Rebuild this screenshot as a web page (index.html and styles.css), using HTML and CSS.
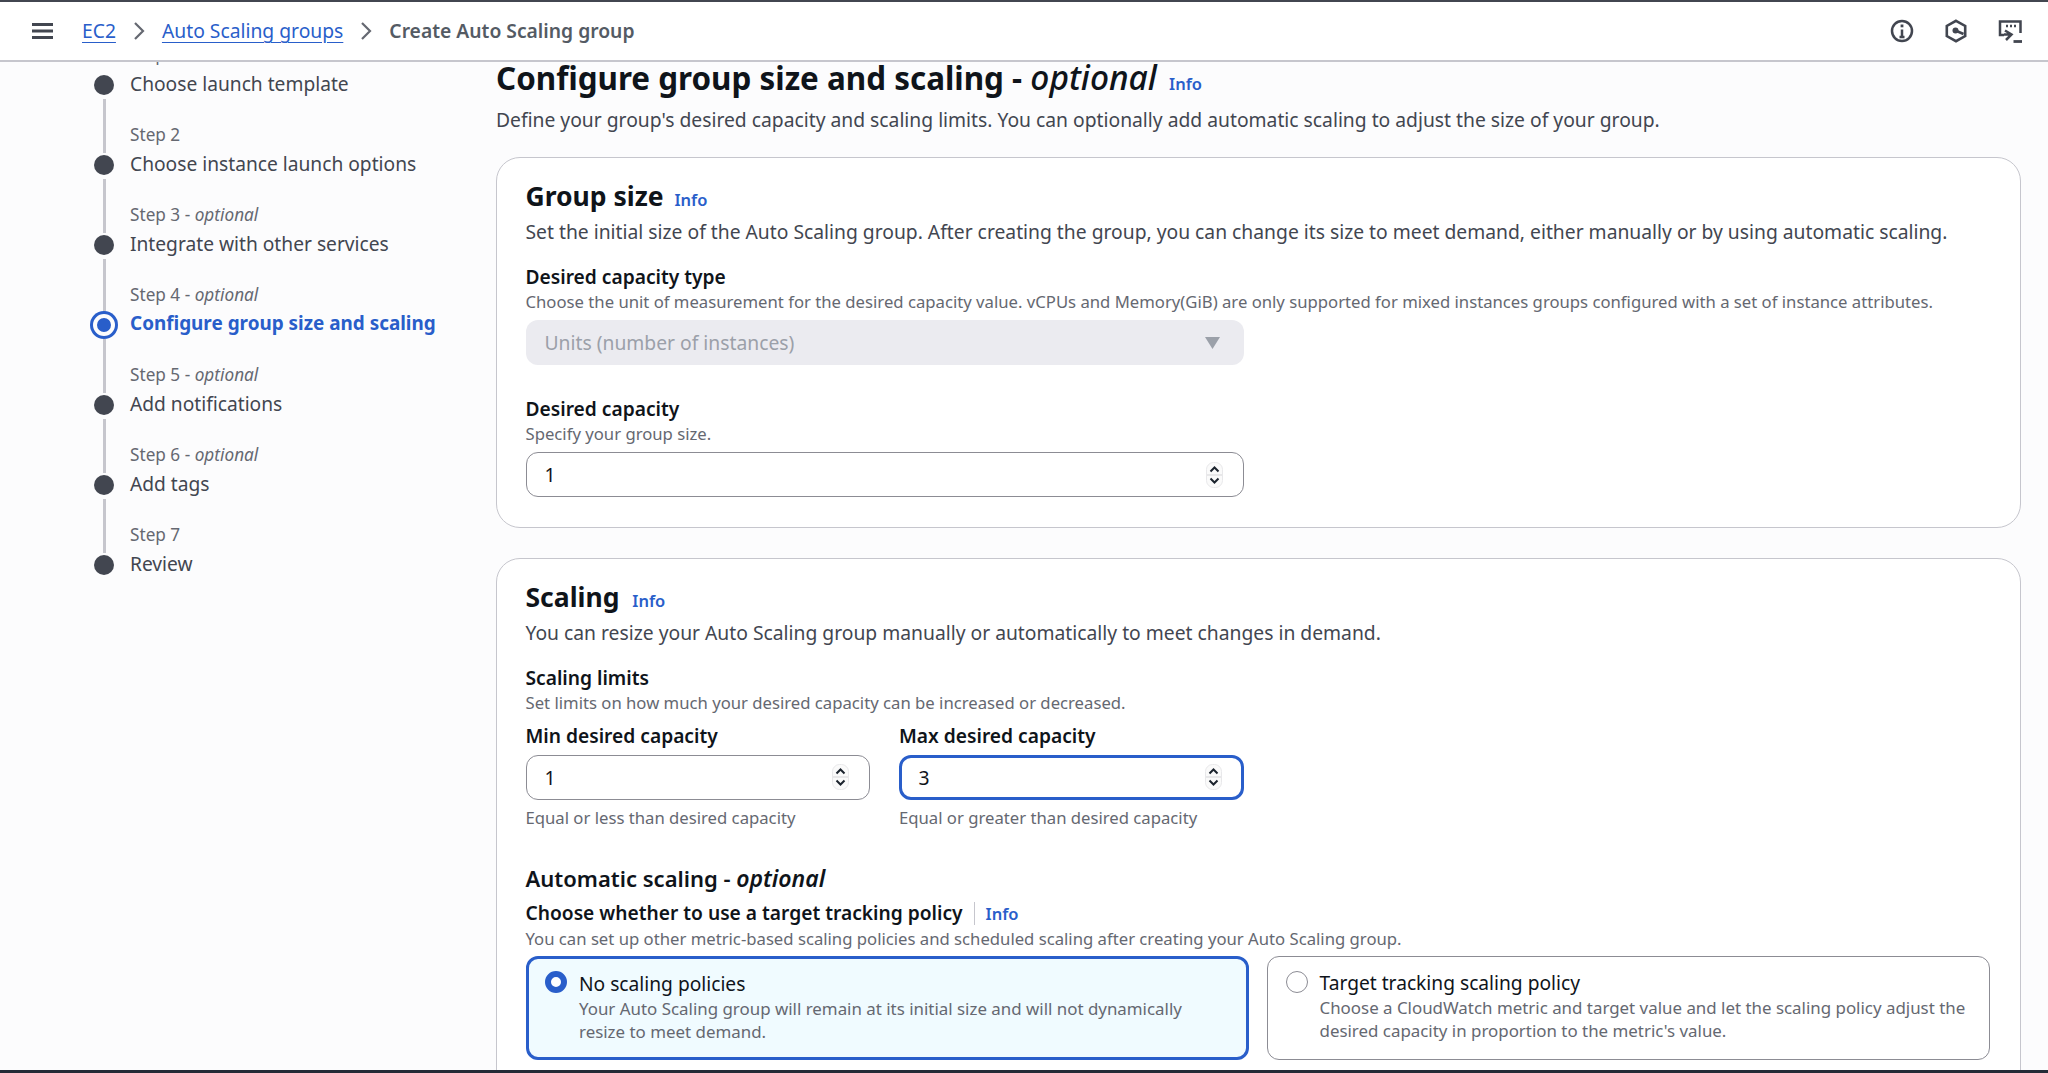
FILE: index.html
```html
<!DOCTYPE html>
<html lang="en">
<head>
    <title>Create Auto Scaling group</title>
    <link rel="stylesheet" href="styles.css">
</head>
<body>
<div class="topbar">
    <svg class="menu-icon" width="21" height="16" viewBox="0 0 21 16"><path d="M0 1.500h21M0 8h21M0 14.500h21" stroke="#424650" stroke-width="2.800" fill="none"/></svg>
    <nav class="crumbs">
        <a class="crumb-link">EC2</a>
        <svg class="crumb-sep" width="12" height="20" viewBox="0 0 12 20"><path d="M2 2l8 8-8 8" stroke="#656871" stroke-width="2.200" fill="none"/></svg>
        <a class="crumb-link">Auto Scaling groups</a>
        <svg class="crumb-sep" width="12" height="20" viewBox="0 0 12 20"><path d="M2 2l8 8-8 8" stroke="#656871" stroke-width="2.200" fill="none"/></svg>
        <span class="crumb-current">Create Auto Scaling group</span>
    </nav>
    <div class="top-icons">
        <svg width="24" height="24" viewBox="0 0 24 24" fill="none" stroke="#424650" stroke-width="2.500"><circle cx="12" cy="12" r="10"/><path d="M12 10.500V18M9.500 18h5"/><path d="M12 5.500v2.800" stroke-width="2.800"/></svg>
        <svg width="24" height="24" viewBox="0 0 24 24" fill="none" stroke="#424650" stroke-width="2.600"><path d="M12 1.800l9.200 5.100v10.200L12 22.200l-9.200-5.100V6.900z"/><circle cx="11.500" cy="11.500" r="3" fill="#424650" stroke="none"/><path d="M11.500 11.500l8 3.500"/></svg>
        <svg width="24" height="24" viewBox="0 0 24 24" fill="none" stroke="#424650" stroke-width="2.500"><path d="M6 16H2V2.500h20.500V14"/><path d="M8 7h2M12 7h2M16 7h2" stroke-width="2.500"/><path d="M7 11.500l6.500 4-5.500 5.500M6 15.500h7"/><path d="M15.500 22.500H24" stroke-width="2.800"/></svg>
    </div>
</div>

<div class="page">
    <ol class="steps">
        <li class="step">
            <span class="step-label">Step 1</span>
            <span class="step-title">Choose launch template</span>
        </li>
        <li class="step">
            <span class="step-label">Step 2</span>
            <span class="step-title">Choose instance launch options</span>
        </li>
        <li class="step">
            <span class="step-label">Step 3 - <i>optional</i></span>
            <span class="step-title">Integrate with other services</span>
        </li>
        <li class="step step-active">
            <span class="step-label">Step 4 - <i>optional</i></span>
            <span class="step-title">Configure group size and scaling</span>
        </li>
        <li class="step">
            <span class="step-label">Step 5 - <i>optional</i></span>
            <span class="step-title">Add notifications</span>
        </li>
        <li class="step">
            <span class="step-label">Step 6 - <i>optional</i></span>
            <span class="step-title">Add tags</span>
        </li>
        <li class="step step-last">
            <span class="step-label">Step 7</span>
            <span class="step-title">Review</span>
        </li>
    </ol>

    <main class="content">
        <h1 class="page-title">Configure group size and scaling - <i>optional</i> <a class="info">Info</a></h1>
        <p class="page-desc">Define your group's desired capacity and scaling limits. You can optionally add automatic scaling to adjust the size of your group.</p>

        <section class="card">
            <h2 class="card-title">Group size <a class="info">Info</a></h2>
            <p class="card-desc">Set the initial size of the Auto Scaling group. After creating the group, you can change its size to meet demand, either manually or by using automatic scaling.</p>

            <div class="field">
                <div class="label">Desired capacity type</div>
                <div class="hint">Choose the unit of measurement for the desired capacity value. vCPUs and Memory(GiB) are only supported for mixed instances groups configured with a set of instance attributes.</div>
                <div class="select">
                    <span>Units (number of instances)</span>
                    <svg width="15" height="12" viewBox="0 0 15 12"><path d="M0 0h15l-7.500 12z" fill="#9ba0a9"/></svg>
                </div>
            </div>

            <div class="field field-next">
                <div class="label">Desired capacity</div>
                <div class="hint">Specify your group size.</div>
                <div class="num-input">
                    <span>1</span>
                    <svg class="spinner" width="17" height="26" viewBox="0 0 17 26"><rect x="0.500" y="0.500" width="16" height="25" rx="7" fill="#fafafa" stroke="#e8e8ea"/><path d="M1 13h15" stroke="#d5d5d8"/><path d="M4.500 9.500L8.500 5.500 12.500 9.500M4.500 16.500L8.500 20.500 12.500 16.500" stroke="#1b232d" stroke-width="2" fill="none"/></svg>
                </div>
            </div>
        </section>

        <section class="card card-scaling">
            <h2 class="card-title">Scaling <a class="info info-scaling">Info</a></h2>
            <p class="card-desc">You can resize your Auto Scaling group manually or automatically to meet changes in demand.</p>

            <div class="field">
                <div class="label">Scaling limits</div>
                <div class="hint">Set limits on how much your desired capacity can be increased or decreased.</div>
                <div class="limits">
                    <div>
                        <div class="label">Min desired capacity</div>
                        <div class="num-input">
                            <span>1</span>
                            <svg class="spinner" width="17" height="26" viewBox="0 0 17 26"><rect x="0.500" y="0.500" width="16" height="25" rx="7" fill="#fafafa" stroke="#e8e8ea"/><path d="M1 13h15" stroke="#d5d5d8"/><path d="M4.500 9.500L8.500 5.500 12.500 9.500M4.500 16.500L8.500 20.500 12.500 16.500" stroke="#1b232d" stroke-width="2" fill="none"/></svg>
                        </div>
                        <div class="hint hint-below">Equal or less than desired capacity</div>
                    </div>
                    <div>
                        <div class="label">Max desired capacity</div>
                        <div class="num-input num-input-focus">
                            <span>3</span>
                            <svg class="spinner" width="17" height="26" viewBox="0 0 17 26"><rect x="0.500" y="0.500" width="16" height="25" rx="7" fill="#fafafa" stroke="#e8e8ea"/><path d="M1 13h15" stroke="#d5d5d8"/><path d="M4.500 9.500L8.500 5.500 12.500 9.500M4.500 16.500L8.500 20.500 12.500 16.500" stroke="#1b232d" stroke-width="2" fill="none"/></svg>
                        </div>
                        <div class="hint hint-below">Equal or greater than desired capacity</div>
                    </div>
                </div>
            </div>

            <h3 class="sub-title">Automatic scaling - <i>optional</i></h3>
            <div class="label label-policy">Choose whether to use a target tracking policy <a class="info info-split">Info</a></div>
            <div class="hint">You can set up other metric-based scaling policies and scheduled scaling after creating your Auto Scaling group.</div>

            <div class="tiles">
                <div class="tile tile-on">
                    <span class="radio radio-on"></span>
                    <div>
                        <div class="tile-title">No scaling policies</div>
                        <div class="tile-desc">Your Auto Scaling group will remain at its initial size and will not dynamically resize to meet demand.</div>
                    </div>
                </div>
                <div class="tile">
                    <span class="radio"></span>
                    <div>
                        <div class="tile-title">Target tracking scaling policy</div>
                        <div class="tile-desc">Choose a CloudWatch metric and target value and let the scaling policy adjust the desired capacity in proportion to the metric's value.</div>
                    </div>
                </div>
            </div>
        </section>
    </main>
</div>
<div class="bottom-line"></div>
</body>
</html>
```

FILE: styles.css
```css
html, body {
    margin: 0;
    padding: 0;
    height: 100%;
    overflow: hidden;
}

body {
    display: flex;
    flex-direction: column;
    background: #fcfcfd;
    color: #0f141a;
    font-family: "Noto Sans", sans-serif;
    font-size: 18px;
}

a {
    text-decoration: none;
}

i {
    font-style: italic;
}

.topbar {
    flex: none;
    display: flex;
    align-items: center;
    height: 58px;
    padding: 0 26px 0 32px;
    background: #fff;
    border-top: 2px solid #424650;
    border-bottom: 2px solid #c6c6cd;
}

.menu-icon {
    margin-right: 29px;
}

.crumbs {
    display: flex;
    align-items: center;
    gap: 17px;
    font-size: 19.300px;
    line-height: 26px;
}

.crumb-link {
    color: #295eca;
    text-decoration: underline;
    text-underline-offset: 4px;
}

.crumb-current {
    color: #545b64;
    font-weight: 600;
}

.top-icons {
    margin-left: auto;
    display: flex;
    gap: 30px;
}

.page {
    flex: 1;
    min-height: 0;
    display: flex;
    overflow: hidden;
}

.steps {
    flex: none;
    width: 496px;
    box-sizing: border-box;
    list-style: none;
    margin: -21.500px 0 0;
    padding: 0 0 0 130px;
}

.step {
    position: relative;
    height: 80px;
}

/* connector and dot are drawn over the row */
.step::before {
    content: "";
    position: absolute;
    left: -27px;
    top: 58px;
    width: 2.500px;
    height: 54px;
    background: #c6c6cd;
}

.step::after {
    content: "";
    position: absolute;
    left: -36px;
    top: 34.500px;
    width: 20px;
    height: 20px;
    border-radius: 50%;
    background: #424650;
}

.step-last::before {
    display: none;
}

.step-label {
    display: block;
    height: 28px;
    line-height: 28px;
    font-size: 17.200px;
    color: #656871;
    white-space: nowrap;
}

.step-title {
    display: block;
    line-height: 29px;
    font-size: 19.200px;
    color: #424650;
    white-space: nowrap;
}

.step-active .step-title {
    color: #295eca;
    font-weight: 700;
    font-size: 18.900px;
}

.step-active::after {
    left: -37px;
    top: 33.500px;
    width: 14px;
    height: 14px;
    background: #295eca;
    border: 4px solid #fcfcfd;
    box-shadow: 0 0 0 3px #295eca;
}

.content {
    flex: none;
    width: 1525px;
    box-sizing: border-box;
}

.page-title {
    margin: 0;
    height: 34px;
    line-height: 30px;
    font-size: 31.400px;
    font-weight: 700;
    white-space: nowrap;
}

.page-title i {
    font-size: 33.500px;
    font-weight: 500;
}

.info {
    color: #295eca;
    font-size: 16.500px;
    font-weight: 600;
    font-style: normal;
    margin-left: 4px;
}

.info-scaling {
    margin-left: 6px;
}

.page-desc {
    margin: 9px 0 23px;
    line-height: 29px;
    font-size: 19.300px;
    color: #424650;
    white-space: nowrap;
}

.card {
    box-sizing: border-box;
    height: 371px;
    margin-bottom: 29.500px;
    padding: 20px 28.500px 0;
    background: #fff;
    border: 1.500px solid #c6c6cd;
    border-radius: 24px;
}

.card-scaling {
    height: 560px;
}

.card-title {
    margin: 0;
    height: 36px;
    line-height: 36px;
    font-size: 26.500px;
    font-weight: 700;
}

.card-desc {
    margin: 3px 0 0;
    line-height: 29px;
    font-size: 19.300px;
    color: #424650;
    white-space: nowrap;
}

.field {
    margin-top: 17px;
}

.field-next {
    margin-top: 30px;
}

.label {
    line-height: 27px;
    font-size: 19.200px;
    font-weight: 600;
    white-space: nowrap;
}

.hint {
    line-height: 23px;
    font-size: 16.700px;
    color: #656871;
    white-space: nowrap;
}

.select,
.num-input {
    box-sizing: border-box;
    width: 718px;
    height: 45px;
    margin-top: 7px;
    padding: 0 20px 0 19px;
    display: flex;
    align-items: center;
    justify-content: space-between;
    font-size: 19.300px;
    border-radius: 12px;
}

.select {
    background: #ebebf0;
    color: #9ba0a9;
    padding-right: 24px;
}

.num-input {
    background: #fff;
    border: 1.500px solid #8c8c94;
    padding-left: 18px;
}

.num-input-focus {
    border: 3px solid #295eca;
    padding: 0 18.500px 0 16.500px;
}

.spinner {
    flex: none;
}

.limits {
    display: grid;
    grid-template-columns: 344.500px 344.500px;
    gap: 29px;
    margin-top: 8px;
}

.limits .num-input {
    width: 100%;
    margin-top: 6px;
}

.hint-below {
    margin-top: 6px;
}

.sub-title {
    margin: 33px 0 0;
    line-height: 32px;
    font-size: 22px;
    font-weight: 600;
}

.sub-title i {
    font-size: 23px;
    font-weight: 600;
}

.label-policy {
    margin-top: 5px;
}

.info-split {
    margin-left: 6px;
    padding-left: 11px;
    border-left: 1px solid #c6c6cd;
}

.tiles {
    display: grid;
    grid-template-columns: 723px 723px;
    gap: 18px;
    margin-top: 6.500px;
}

.tile {
    box-sizing: border-box;
    height: 104px;
    padding: 12px 18px;
    display: flex;
    gap: 12px;
    background: #fff;
    border: 1.500px solid #8c8c94;
    border-radius: 12px;
}

.tile-on {
    background: #f0fbff;
    border: 3px solid #295eca;
    padding: 10.500px 16.500px;
}

.radio {
    flex: none;
    box-sizing: border-box;
    width: 22px;
    height: 22px;
    margin-top: 1.500px;
    border: 1.500px solid #8c8c94;
    border-radius: 50%;
    background: #fff;
}

.radio-on {
    border: 6px solid #295eca;
}

.tile-title {
    line-height: 27px;
    font-size: 19.200px;
}

.tile-desc {
    line-height: 23px;
    font-size: 16.900px;
    color: #656871;
}

.bottom-line {
    position: fixed;
    left: 0;
    right: 0;
    bottom: 0;
    height: 3px;
    background: #232b37;
}
```
